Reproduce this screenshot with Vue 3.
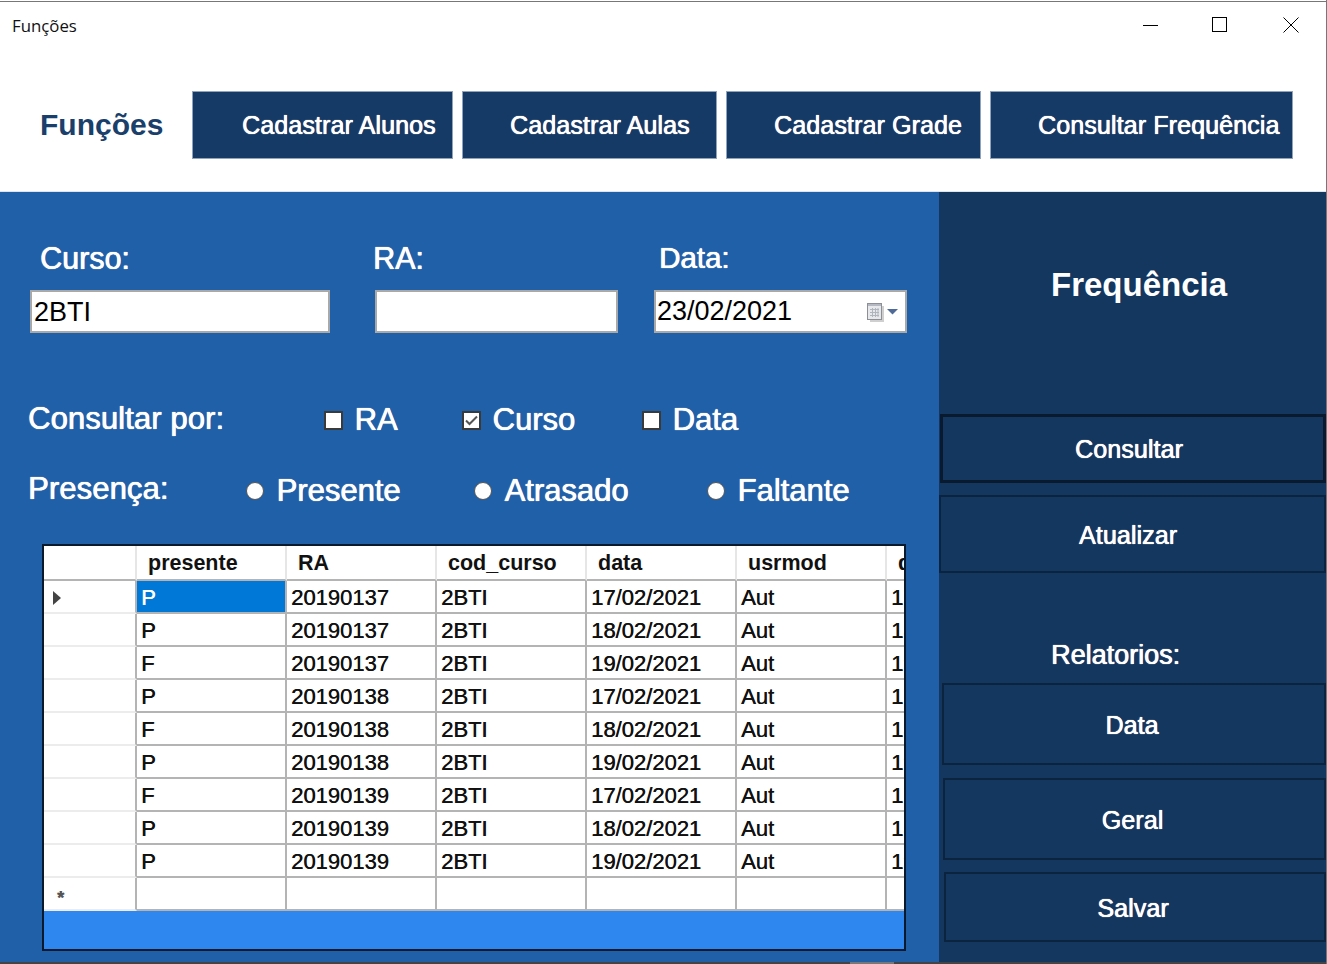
<template>
  <div class="window">
    <!-- Title bar -->
    <div class="titlebar">
      <span class="title">Funções</span>
      <div class="window-controls">
        <svg class="ctl-min" width="16" height="16" viewBox="0 0 16 16"><path d="M0 8.5H15" stroke="#000" fill="none" /></svg>
        <svg width="16" height="16" viewBox="0 0 16 16"><rect x="0.5" y="0.5" width="14" height="14" stroke="#000" fill="none" /></svg>
        <svg width="16" height="16" viewBox="0 0 16 16"><path d="M0.5 0.5L15.5 15.5M15.5 0.5L0.5 15.5" stroke="#000" fill="none" /></svg>
      </div>
    </div>

    <!-- Top menu -->
    <div class="menu">
      <span class="menu-title">Funções</span>
      <button
        v-for="item in menuItems"
        :key="item.label"
        class="menu-btn fuzzy"
        :class="item.cls"
      >{{ item.label }}</button>
    </div>

    <div class="content">
      <!-- Form and grid -->
      <div class="main">
        <div class="fields">
          <div class="field field-curso">
            <label class="fuzzy">Curso:</label>
            <input type="text" value="2BTI" />
          </div>
          <div class="field field-ra">
            <label class="fuzzy">RA:</label>
            <input type="text" value="" />
          </div>
          <div class="field field-data">
            <label class="fuzzy">Data:</label>
            <div class="date-input">
              <span>23/02/2021</span>
              <svg width="32" height="20" viewBox="0 0 32 20">
                <path d="M4 19H17V4" stroke="#cfcfcf" stroke-width="2" fill="none" />
                <rect x="1.5" y="1.5" width="14" height="16" fill="#e6e8ec" stroke="#8c8f96" />
                <rect x="2" y="2" width="13" height="2" fill="#b4b8c2" />
                <path d="M4 7.5H13M4 10.5H13M4 13.5H13M6.5 6V15M9.5 6V15M12 6V15" stroke="#b0b4bc" fill="none" />
                <path d="M21 7H32L26.5 12.5Z" fill="#4f6a97" />
              </svg>
            </div>
          </div>
        </div>

        <div class="option-row consult fuzzy">
          <span class="option-label">Consultar por:</span>
          <span v-for="o in checks" :key="o.label" class="option" :class="o.cls">
            <span class="checkbox">
              <svg v-if="o.checked" width="15" height="15" viewBox="0 0 15 15">
                <path d="M2 7.5L5.5 11L13 3.5" stroke="#555" stroke-width="2" fill="none" />
              </svg>
            </span>
            {{ o.label }}
          </span>
        </div>

        <div class="option-row presence fuzzy">
          <span class="option-label">Presença:</span>
          <span v-for="o in radios" :key="o.label" class="option" :class="o.cls">
            <span class="radio"></span>
            {{ o.label }}
          </span>
        </div>

        <div class="grid-box">
          <table class="grid">
            <thead>
              <tr>
                <th class="row-head"></th>
                <th v-for="c in columns" :key="c">{{ c }}</th>
              </tr>
            </thead>
            <tbody>
              <tr v-for="(r, i) in rows" :key="i">
                <td class="row-head">
                  <svg v-if="i === 0" width="10" height="14" viewBox="0 0 10 14"><path d="M1 0L9 7L1 14Z" fill="#444" /></svg>
                </td>
                <td :class="{ selected: i === 0 }">{{ r[0] }}</td>
                <td>{{ r[1] }}</td>
                <td>2BTI</td>
                <td>{{ r[2] }}</td>
                <td>Aut</td>
                <td>{{ r[2] }}</td>
              </tr>
              <tr>
                <td class="row-head new-row">*</td>
                <td v-for="c in columns" :key="c"></td>
              </tr>
            </tbody>
          </table>
        </div>
      </div>

      <!-- Side panel -->
      <div class="side">
        <h1 class="side-title">Frequência</h1>
        <button class="side-btn fuzzy btn-consultar">Consultar</button>
        <button class="side-btn fuzzy btn-atualizar">Atualizar</button>
        <div class="side-label fuzzy">Relatorios:</div>
        <button class="side-btn fuzzy btn-data">Data</button>
        <button class="side-btn fuzzy btn-geral">Geral</button>
        <button class="side-btn fuzzy btn-salvar">Salvar</button>
      </div>
    </div>
    <div class="bottom-edge"><span></span></div>
  </div>
</template>

<script setup>
const menuItems = [
  { label: 'Cadastrar Alunos', cls: 'm-alunos' },
  { label: 'Cadastrar Aulas', cls: 'm-aulas' },
  { label: 'Cadastrar Grade', cls: 'm-grade' },
  { label: 'Consultar Frequência', cls: 'm-freq' },
]

const checks = [
  { label: 'RA', checked: false, cls: 'c-ra' },
  { label: 'Curso', checked: true, cls: 'c-curso' },
  { label: 'Data', checked: false, cls: 'c-data' },
]

const radios = [
  { label: 'Presente', cls: 'r-presente' },
  { label: 'Atrasado', cls: 'r-atrasado' },
  { label: 'Faltante', cls: 'r-faltante' },
]

const columns = ['presente', 'RA', 'cod_curso', 'data', 'usrmod', 'dtmod']

const rows = [
  ['P', '20190137', '17/02/2021'],
  ['P', '20190137', '18/02/2021'],
  ['F', '20190137', '19/02/2021'],
  ['P', '20190138', '17/02/2021'],
  ['F', '20190138', '18/02/2021'],
  ['P', '20190138', '19/02/2021'],
  ['F', '20190139', '17/02/2021'],
  ['P', '20190139', '18/02/2021'],
  ['P', '20190139', '19/02/2021'],
]
</script>

<style>
html, body {
  margin: 0;
  background: #fff;
}
</style>

<style scoped>
.window {
  width: 1327px;
  height: 964px;
  box-sizing: border-box;
  overflow: hidden;
  display: flex;
  flex-direction: column;
  background: #fff;
  border-right: 1px solid #777;
  font-family: "Liberation Sans", Arial, sans-serif;
}

/* the reference text is slightly smeared by scaling */
.fuzzy {
  text-shadow: 0.4px 0 0 currentColor, 0 0 1px currentColor;
}

.titlebar {
  height: 50px;
  margin-top: 1px;
  border-top: 1px solid #777;
  box-sizing: border-box;
  display: flex;
  justify-content: space-between;
  padding: 14px 27px 0 12px;
}

.title {
  font-family: "Open Sans", sans-serif;
  font-size: 16.8px;
  line-height: 20px;
  color: #111;
}

.window-controls {
  display: flex;
  gap: 55px;
  height: 16px;
  padding-top: 1px;
}

.ctl-min {
  margin-right: -2px;
}

.menu {
  height: 140px;
  box-sizing: border-box;
  padding: 40px 0 0 40px;
  display: flex;
  align-items: flex-start;
}

.menu-title {
  width: 152px;
  height: 68px;
  line-height: 67px;
  font-size: 30px;
  font-weight: 700;
  color: #1a3f6b;
}

.menu-btn {
  height: 68px;
  margin-right: 9px;
  padding: 0 0 0 47px;
  border: 1px solid #8fa3bd;
  background: #163a66;
  color: #fff;
  font-family: inherit;
  font-size: 25px;
  letter-spacing: 0.12px;
  text-align: left;
}

.m-alunos { width: 261px; padding-left: 49px; }
.m-aulas { width: 255px; }
.m-grade { width: 255px; }
.m-freq { width: 303px; margin-right: 0; }

.content {
  flex: 1;
  min-height: 0;
  display: flex;
  border-top: 1px solid #dfe5ec;
}

.main {
  width: 939px;
  flex: none;
  box-sizing: border-box;
  background: #2060a8;
  color: #fff;
  padding-top: 48px;
}

.fields {
  display: flex;
  height: 93px;
}

.field {
  display: flex;
  flex-direction: column;
  gap: 14px;
}

.field label {
  font-size: 30.5px;
  line-height: 36px;
}

.field input,
.date-input {
  height: 43px;
  box-sizing: border-box;
  border: 2px solid #a9a9a9;
  background: #fff;
  color: #000;
  font-family: inherit;
  font-size: 27px;
  padding: 1px 2px 0;
  border-radius: 0;
  outline: none;
}

.field-curso { margin-left: 30px; width: 300px; }
.field-curso label { padding-left: 10px; }
.field-ra { margin-left: 45px; width: 243px; }
.field-ra label { margin-left: -2px; }
.field-data { margin-left: 36px; width: 253px; }
.field-data label { padding-left: 5px; font-size: 29.5px; }

.date-input {
  display: flex;
  align-items: center;
  justify-content: space-between;
  padding: 0 7px 0 1px;
  line-height: 41px;
}

.option-row {
  display: flex;
  align-items: center;
  padding-left: 28px;
  font-size: 31px;
}

.consult {
  margin-top: 67px;
  height: 40px;
}

.presence {
  margin-top: 31px;
  height: 40px;
}

.option-label {
  flex: none;
  position: relative;
  top: -1px;
  letter-spacing: 0.1px;
}

.presence .option-label {
  top: -2px;
}

.consult .option-label { width: 296px; }
.presence .option-label { width: 218px; }

.option {
  display: flex;
  align-items: center;
  flex: none;
  gap: 11.5px;
}

.c-ra { width: 138px; }
.c-curso { width: 180px; }
.r-presente { width: 228px; gap: 12.5px; }
.r-atrasado { width: 233px; gap: 12.5px; }
.r-faltante { gap: 12.5px; }

.checkbox {
  width: 19px;
  height: 19px;
  box-sizing: border-box;
  border: 2px solid #3a3a3a;
  background: #fff;
  display: flex;
  align-items: center;
  justify-content: center;
}

.radio {
  width: 18px;
  height: 18px;
  box-sizing: border-box;
  border: 1px solid #555;
  border-radius: 50%;
  background: #fff;
}

.grid-box {
  width: 864px;
  height: 407px;
  margin: 33px 0 0 42px;
  box-sizing: border-box;
  border: 2px solid #0a1a2c;
  background: #2e86ef;
  overflow: hidden;
}

.grid {
  table-layout: fixed;
  width: 993px;
  border-collapse: separate;
  border-spacing: 0;
  background: #fff;
  color: #111;
  font-size: 22px;
}

.grid th,
.grid td {
  width: 150px;
  box-sizing: border-box;
  height: 33px;
  padding: 2px 0 0 4px;
  overflow: hidden;
  white-space: nowrap;
  border-right: 2px solid #b4b4b4;
  border-bottom: 2px solid #b4b4b4;
  text-shadow: 0.4px 0 0 currentColor;
}

.grid th {
  height: 35px;
  padding-left: 11px;
  text-align: left;
  font-weight: 700;
  font-size: 21.5px;
  border-right-color: #e6e6e6;
  text-shadow: none;
}

.grid .row-head {
  width: 93px;
  padding-left: 8px;
  border-bottom-color: #ececec;
  border-right-color: #b4b4b4;
}

.grid thead .row-head {
  border-bottom-color: #b4b4b4;
  border-right-color: #e6e6e6;
}

.grid .row-head svg {
  display: block;
}

.grid .new-row {
  padding: 8px 0 0 13px;
  font-weight: 700;
  font-size: 18px;
  line-height: 20px;
  color: #555;
}

.grid td.selected {
  background: #0078d7;
  color: #fff;
}

.side {
  flex: 1;
  background: #14375f;
  color: #fff;
  display: flex;
  flex-direction: column;
  align-items: flex-end;
}

.side-title {
  align-self: stretch;
  margin: 72px 0 0;
  padding-left: 112px;
  height: 150px;
  font-size: 33px;
  line-height: 42px;
  font-weight: 700;
}

.side-btn {
  box-sizing: border-box;
  background: #14375f;
  border: 2px solid #0c2340;
  color: #fff;
  font-family: inherit;
  font-size: 25px;
  letter-spacing: 0.1px;
  margin-right: 1px;
  padding: 2px 4px 0 0;
}

.btn-consultar {
  width: 386px;
  height: 69px;
  border: 3px solid #0a1a2e;
  padding-right: 8px;
}

.btn-atualizar {
  width: 387px;
  height: 78px;
  margin-top: 12px;
  padding-right: 9px;
}

.side-label {
  align-self: stretch;
  margin-top: 66px;
  padding-left: 112px;
  height: 44px;
  font-size: 27px;
  line-height: 32px;
}

.btn-data {
  width: 384px;
  height: 82px;
}

.btn-geral {
  width: 383px;
  height: 82px;
  margin-top: 13px;
}

.btn-salvar {
  width: 382px;
  height: 70px;
  margin-top: 12px;
}

.bottom-edge {
  height: 2px;
  flex: none;
  margin-top: -2px;
  position: relative;
  background: #444;
}

.bottom-edge span {
  display: block;
  width: 44px;
  height: 2px;
  margin-left: 850px;
  background: #777;
}
</style>
